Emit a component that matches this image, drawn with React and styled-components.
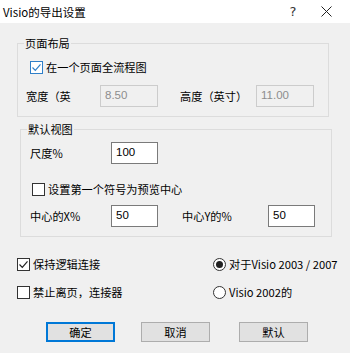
import React from "react";
import styled, { createGlobalStyle } from "styled-components";

const Global = createGlobalStyle`
html, body {
  margin: 0;
  padding: 0;
  background: #f0f0f0;
}
body {
  font-family: "Noto Sans CJK SC", "Noto Sans", sans-serif;
  font-size: 11.2px;
  color: #000;
}
`

const Dialog = styled.div`
width: 350px;
height: 353px;
background: #f0f0f0;
overflow: hidden;
`
const TitleBar = styled.div`
height: 23px;
background: #fff;
display: flex;
align-items: center;
padding-left: 3px;
font-size: 11.5px;
`
const Title = styled.div`
flex: 1;
`
const TitleBtn = styled.div`
width: ${p => p.w}px;
display: flex;
justify-content: center;
font-size: 13px;
color: #333;
font-family: "DejaVu Sans", sans-serif;
`
const Body = styled.div`
display: flex;
flex-direction: column;
`
const Group = styled.fieldset`
margin: ${p => p.top}px 0 0 ${p => p.left}px;
width: 312px;
box-sizing: border-box;
border: 1px solid #dcdcdc;
padding: ${p => p.pt}px 0 ${p => p.pb}px 0;
display: flex;
flex-direction: column;
`
const Legend = styled.legend`
margin-left: 6px;
padding: 0 1px;
line-height: 14px;
height: 14px;
`
const Row = styled.div`
display: flex;
align-items: center;
height: ${p => p.h}px;
margin-top: ${p => p.mt || 0}px;
padding-left: ${p => p.pl || 0}px;
`
const Label = styled.span`
width: ${p => p.w}px;
line-height: 14px;
white-space: nowrap;
`
const Field = styled.div`
box-sizing: border-box;
width: ${p => p.w}px;
height: 22px;
border: 1px solid ${p => (p.disabled ? "#cccccc" : "#7a7a7a")};
background: ${p => (p.disabled ? "#f0f0f0" : "#fff")};
color: ${p => (p.disabled ? "#8d8d8d" : "#000")};
padding: 2px 0 0 4px;
font-family: "Liberation Sans", Arial, sans-serif;
font-size: 11.5px;
line-height: 14px;
`
const Box = styled.span`
box-sizing: border-box;
width: 13px;
height: 13px;
border: 1px solid ${p => p.color};
background: #fff;
display: inline-flex;
align-items: center;
justify-content: center;
margin-right: 3px;
flex-shrink: 0;
`
const Radio = styled(Box)`
border-radius: 50%;
`
const Dot = styled.span`
width: 7px;
height: 7px;
border-radius: 50%;
background: #222;
`
const Option = styled.div`
display: flex;
align-items: center;
height: 14px;
line-height: 14px;
white-space: nowrap;
`
const Columns = styled.div`
display: flex;
margin-top: ${p => p.mt}px;
padding-left: 17px;
`
const Col = styled.div`
display: flex;
flex-direction: column;
gap: ${p => p.gap}px;
width: ${p => p.w}px;
`
const Buttons = styled.div`
display: flex;
margin-top: 23px;
padding-left: 46px;
`
const Button = styled.div`
box-sizing: border-box;
width: 69px;
height: 20px;
margin-left: ${p => p.ml || 0}px;
background: #e1e1e1;
border: 1px solid ${p => (p.primary ? "#0078d7" : "#adadad")};
box-shadow: ${p => (p.primary ? "inset 0 0 0 1px #0078d7" : "none")};
display: flex;
align-items: center;
justify-content: center;
`

function CheckBox({ checked, color = "#333", mark = "#222", children }) {
  return (
    <Option>
      <Box color={color}>
        {checked && (
          <svg width="11" height="11" viewBox="0 0 11 11">
            <path d="M1.5 5.5 L4.3 8.3 L9.5 2.3" fill="none" stroke={mark} strokeWidth="1.2" />
          </svg>
        )}
      </Box>
      {children}
    </Option>
  );
}

function RadioOption({ checked, children }) {
  return (
    <Option>
      <Radio color="#333">{checked && <Dot />}</Radio>
      {children}
    </Option>
  );
}

export default function App() {
  return (
    <Dialog>
      <Global />
      <TitleBar>
        <Title>Visio的导出设置</Title>
        <TitleBtn w={18}>?</TitleBtn>
        <TitleBtn w={48}>
          <svg width="11" height="11" viewBox="0 0 11 11">
            <path d="M0.5 0.5 L10.5 10.5 M10.5 0.5 L0.5 10.5" stroke="#222" strokeWidth="1" fill="none" />
          </svg>
        </TitleBtn>
      </TitleBar>
      <Body>
        <Group top={13} left={17} pt={10} pb={9}>
          <Legend>页面布局</Legend>
          <Row h={14} pl={12}>
            <CheckBox checked color="#2f7fc8" mark="#2f7fc8">在一个页面全流程图</CheckBox>
          </Row>
          <Row h={22} mt={11} pl={8}>
            <Label w={74}>宽度（英</Label>
            <Field w={58} disabled>8.50</Field>
            <Label w={22} />
            <Label w={76}>高度（英寸）</Label>
            <Field w={58} disabled>11.00</Field>
          </Row>
        </Group>
        <Group top={5} left={20} pt={6} pb={9}>
          <Legend>默认视图</Legend>
          <Row h={22} pl={9}>
            <Label w={81}>尺度%</Label>
            <Field w={47}>100</Field>
          </Row>
          <Row h={14} mt={18} pl={11}>
            <CheckBox>设置第一个符号为预览中心</CheckBox>
          </Row>
          <Row h={22} mt={9} pl={9}>
            <Label w={81}>中心的X%</Label>
            <Field w={47}>50</Field>
            <Label w={24} />
            <Label w={86}>中心Y的%</Label>
            <Field w={47}>50</Field>
          </Row>
        </Group>
        <Columns mt={20}>
          <Col w={196} gap={14}>
            <CheckBox checked>保持逻辑连接</CheckBox>
            <CheckBox>禁止离页，连接器</CheckBox>
          </Col>
          <Col w={130} gap={14}>
            <RadioOption checked>对于Visio 2003 / 2007</RadioOption>
            <RadioOption>Visio 2002的</RadioOption>
          </Col>
        </Columns>
        <Buttons>
          <Button primary>确定</Button>
          <Button ml={26}>取消</Button>
          <Button ml={29}>默认</Button>
        </Buttons>
      </Body>
    </Dialog>
  );
}
